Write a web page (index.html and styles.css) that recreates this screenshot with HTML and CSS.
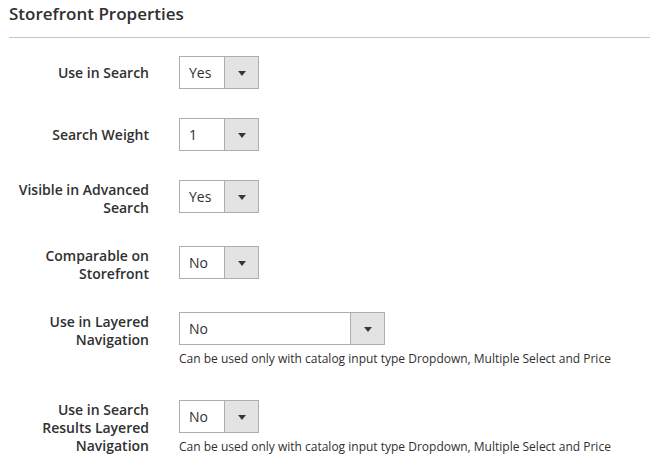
FILE: index.html
```html
<!DOCTYPE html>
<html lang="en">
<head>
<meta charset="utf-8">
<title>Storefront Properties</title>
<link rel="stylesheet" href="styles.css">
</head>
<body>
<div class="section">
  <div class="section-title">Storefront Properties</div>
  <div class="fieldset">
    <div class="field">
      <div class="field-label"><span>Use in Search</span></div>
      <div class="field-control">
        <div class="select"><span class="select-value">Yes</span><span class="select-btn"><span class="arrow"></span></span></div>
      </div>
    </div>
    <div class="field">
      <div class="field-label"><span>Search Weight</span></div>
      <div class="field-control">
        <div class="select"><span class="select-value">1</span><span class="select-btn"><span class="arrow"></span></span></div>
      </div>
    </div>
    <div class="field">
      <div class="field-label"><span>Visible in Advanced Search</span></div>
      <div class="field-control">
        <div class="select"><span class="select-value">Yes</span><span class="select-btn"><span class="arrow"></span></span></div>
      </div>
    </div>
    <div class="field">
      <div class="field-label"><span>Comparable on Storefront</span></div>
      <div class="field-control">
        <div class="select"><span class="select-value">No</span><span class="select-btn"><span class="arrow"></span></span></div>
      </div>
    </div>
    <div class="field">
      <div class="field-label"><span>Use in Layered Navigation</span></div>
      <div class="field-control">
        <div class="select select-wide"><span class="select-value">No</span><span class="select-btn"><span class="arrow"></span></span></div>
        <div class="note">Can be used only with catalog input type Dropdown, Multiple Select and Price</div>
      </div>
    </div>
    <div class="field">
      <div class="field-label"><span>Use in Search Results Layered Navigation</span></div>
      <div class="field-control">
        <div class="select"><span class="select-value">No</span><span class="select-btn"><span class="arrow"></span></span></div>
        <div class="note">Can be used only with catalog input type Dropdown, Multiple Select and Price</div>
      </div>
    </div>
  </div>
</div>
</body>
</html>
```

FILE: styles.css
```css
html, body {
  margin: 0;
  padding: 0;
  background: #ffffff;
}

body {
  font-family: "Open Sans", "Noto Sans", sans-serif;
  color: #303030;
  width: 650px;
  height: 463px;
  overflow: hidden;
}

.section {
  padding-left: 9px;
}

.section-title {
  font-size: 17px;
  font-weight: 600;
  line-height: 22px;
  color: #303030;
  padding: 3px 0 12px;
  border-bottom: 1px solid #cbc5c0;
}

.fieldset {
  display: flex;
  flex-direction: column;
  gap: 29px;
  margin-top: 18px;
}

.field {
  display: flex;
  align-items: flex-start;
  gap: 30px;
}

.field-label {
  width: 140px;
  flex: none;
  min-height: 32px;
  box-sizing: border-box;
  padding-top: 1px;
  display: flex;
  align-items: center;
  justify-content: flex-end;
  text-align: right;
  font-size: 14px;
  font-weight: 600;
  line-height: 18px;
  color: #303030;
}

.field-control {
  display: flex;
  flex-direction: column;
  align-items: flex-start;
}

.select {
  display: flex;
  width: 80px;
  height: 33px;
  box-sizing: border-box;
  border: 1px solid #adadad;
  background: #ffffff;
}

.select-wide {
  width: 206px;
}

.select-value {
  flex: 1;
  display: flex;
  align-items: center;
  padding: 0 0 1px 9px;
  font-size: 14px;
  line-height: 19px;
  color: #303030;
}

.select-btn {
  width: 33px;
  flex: none;
  background: #e3e3e3;
  border-left: 1px solid #adadad;
  display: flex;
  align-items: center;
  justify-content: center;
}

.arrow {
  width: 0;
  height: 0;
  border-left: 4px solid transparent;
  border-right: 4px solid transparent;
  border-top: 5px solid #41362f;
  margin-top: 1px;
}

.note {
  font-size: 12px;
  line-height: 18px;
  margin: 5px 0 3px;
  color: #303030;
}
```
